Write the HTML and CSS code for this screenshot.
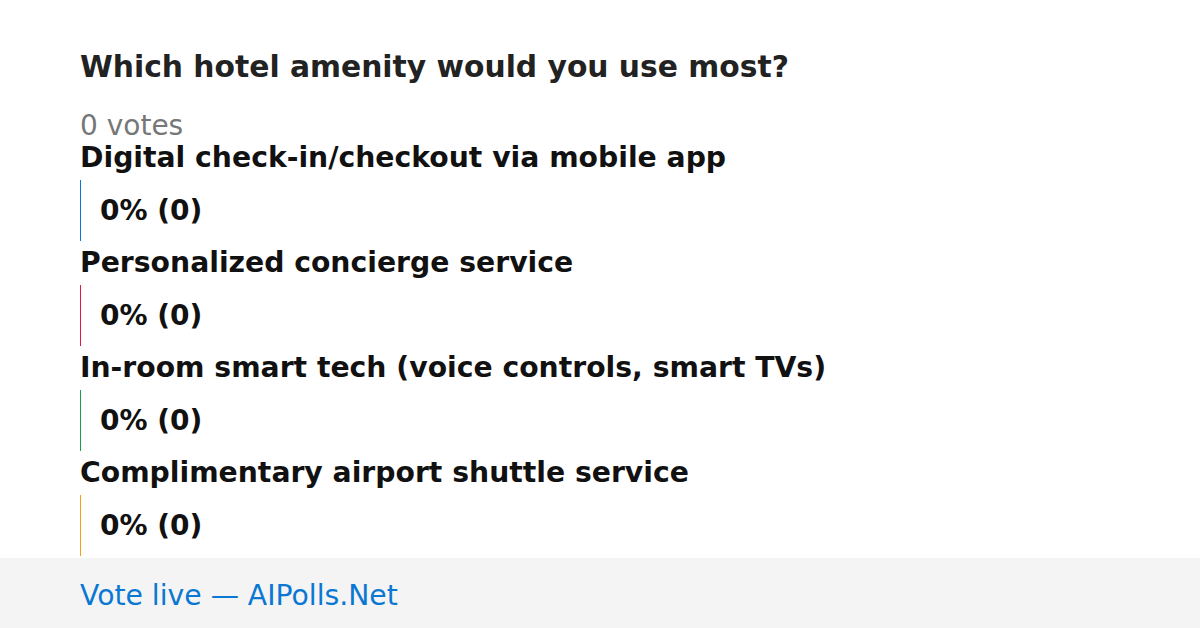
FILE: index.html
```html
<!DOCTYPE html>
<html lang="en">

<head>
    <meta charset="UTF-8" />
    <meta name="viewport" content="width=device-width, initial-scale=1.0" />
    <title>Which hotel amenity would you use most?</title>
    <link rel="stylesheet" href="styles.css">
</head>

<body>
    <main class="poll">
        <h1>Which hotel amenity would you use most?</h1>
        <div class="votes">0 votes</div>

        <div class="option">
            <div class="label">Digital check-in/checkout via mobile app</div>
            <div class="bar blue">0% (0)</div>
        </div>
        <div class="option">
            <div class="label">Personalized concierge service</div>
            <div class="bar red">0% (0)</div>
        </div>
        <div class="option">
            <div class="label">In-room smart tech (voice controls, smart TVs)</div>
            <div class="bar green">0% (0)</div>
        </div>
        <div class="option">
            <div class="label">Complimentary airport shuttle service</div>
            <div class="bar orange">0% (0)</div>
        </div>
    </main>

    <footer>Vote live — AIPolls.Net</footer>
</body>

</html>
```

FILE: styles.css
```css
:root {
    --blue: #0a78d2;
    --red: #e5173f;
    --green: #17a04a;
    --orange: #f7a00f;
}

* {
    margin: 0;
    padding: 0;
    box-sizing: border-box;
}

body {
    font-family: 'DejaVu Sans', 'Liberation Sans', sans-serif;
    background: #fff;
    color: #111;
}

.poll {
    padding: 49px 80px 0;
    display: flex;
    flex-direction: column;
}

h1 {
    font-size: 29.75px;
    line-height: 36px;
    font-weight: 700;
    color: #222;
    margin-bottom: 25px;
}

.votes {
    font-size: 28px;
    line-height: 32px;
    color: #777;
}

.option {
    display: flex;
    flex-direction: column;
    margin-bottom: 6px;
}

.option:last-child {
    margin-bottom: 0;
}

.label {
    font-size: 28.25px;
    line-height: 32px;
    font-weight: 700;
    color: #111;
}

.bar {
    margin-top: 6px;
    height: 61px;
    display: flex;
    align-items: center;
    padding-left: 19px;
    border-left: 1px solid;
    font-size: 28px;
    font-weight: 700;
    color: #111;
}

.bar.blue { border-color: var(--blue); }
.bar.red { border-color: var(--red); }
.bar.green { border-color: var(--green); }
.bar.orange { border-color: var(--orange); }

footer {
    margin-top: 2px;
    height: 70px;
    background: #f4f4f4;
    display: flex;
    align-items: center;
    padding: 4px 80px 0;
    font-size: 28.25px;
    color: var(--blue);
}
```
